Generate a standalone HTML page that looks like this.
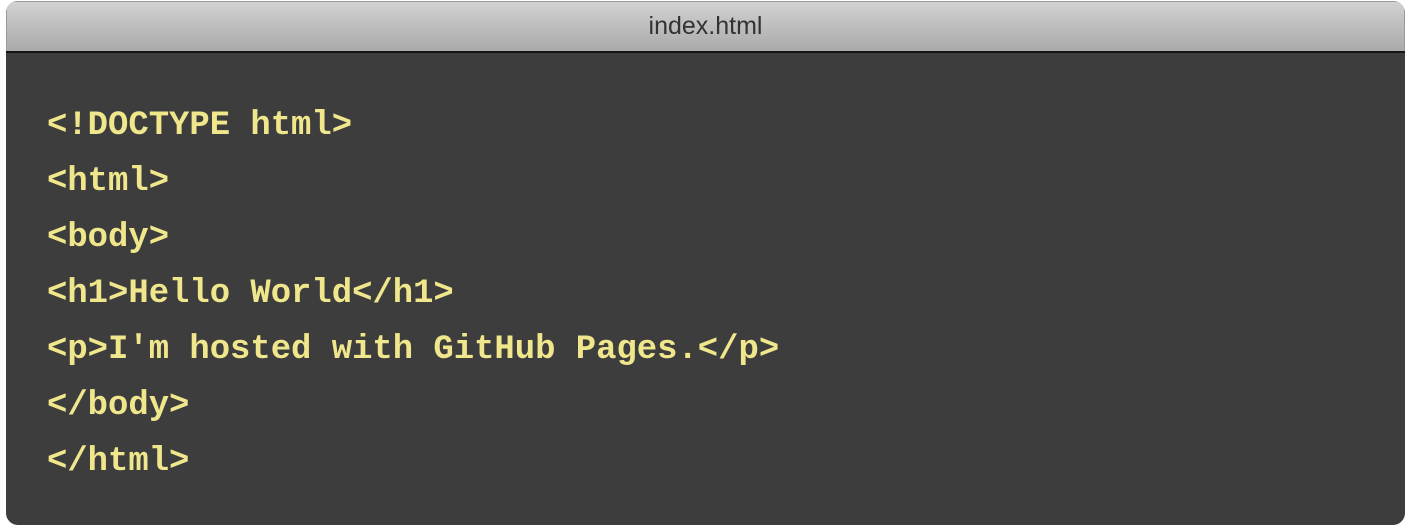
<!DOCTYPE html>
<html><head><style>
html,body{margin:0;padding:0;background:#fff;width:1408px;height:532px;overflow:hidden}
.win{position:absolute;left:6px;top:1px;width:1399px;height:524px;border-radius:12px;overflow:hidden;background:#3d3d3d}
.bar{height:50px;background:linear-gradient(#d2d2d2,#aaaaaa);border-bottom:2px solid #151515;text-align:center;font:25px/50px "Liberation Sans",sans-serif;color:#333;box-shadow:inset 1px 1px 0 #999,inset -1px 0 0 #999}
pre{margin:0;position:absolute;left:41px;top:97px;font:bold 33.9px/56px "Liberation Mono",monospace;color:#f0e68c}
</style></head><body>
<div class="win"><div class="bar">index.html</div>
<pre>&lt;!DOCTYPE html&gt;
&lt;html&gt;
&lt;body&gt;
&lt;h1&gt;Hello World&lt;/h1&gt;
&lt;p&gt;I'm hosted with GitHub Pages.&lt;/p&gt;
&lt;/body&gt;
&lt;/html&gt;</pre></div>
</body></html>
